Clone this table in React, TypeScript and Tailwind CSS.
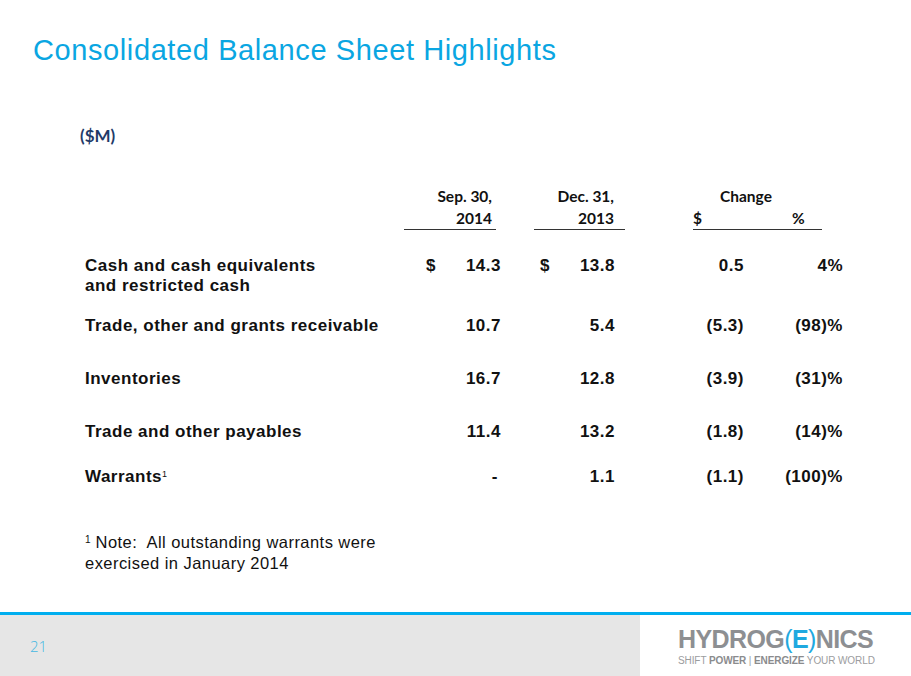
const rows = [
  { label: ["Cash and cash equivalents", "and restricted cash"], a: "14.3", b: "13.8", c: "0.5", d: "4%", dollar: true, mt: "mt-[26px]" },
  { label: ["Trade, other and grants receivable"], a: "10.7", b: "5.4", c: "(5.3)", d: "(98)%", mt: "mt-[20px]" },
  { label: ["Inventories"], a: "16.7", b: "12.8", c: "(3.9)", d: "(31)%", mt: "mt-[33px]" },
  { label: ["Trade and other payables"], a: "11.4", b: "13.2", c: "(1.8)", d: "(14)%", mt: "mt-[33px]" },
  { label: ["Warrants"], sup: true, a: "-", b: "1.1", c: "(1.1)", d: "(100)%", mt: "mt-[25px]" },
];

const calibri = "font-['Lato','Liberation_Sans',sans-serif]";
const arial = "font-['Liberation_Sans','Arial',sans-serif]";

export default function App() {
  return (
    <div className={`w-[911px] h-[676px] bg-white flex flex-col overflow-hidden ${arial}`}>
      <h1 className="mt-[34px] pl-[33px] text-[29px] leading-[32px] text-[#0aa6e2] tracking-[0.6px]">
        Consolidated Balance Sheet Highlights
      </h1>

      <div className={`mt-[60px] pl-[80px] text-[17px] leading-[20px] font-bold text-[#1f3a68] ${calibri}`}>($M)</div>

      {/* column headings */}
      <div className={`mt-[39px] flex pl-[404px] text-[15.5px] leading-[22px] font-bold text-[#111] ${calibri}`}>
        <div className="w-[92px] border-b border-[#333] pr-[4px] text-right">
          <div>Sep. 30,</div>
          <div>2014</div>
        </div>
        <div className="w-[38px]" />
        <div className="w-[91px] border-b border-[#333] pr-[11px] text-right">
          <div>Dec. 31,</div>
          <div>2013</div>
        </div>
        <div className="w-[68px]" />
        <div className="w-[129px] border-b border-[#333]">
          <div className="pl-[27px]">Change</div>
          <div className="flex">
            <span>$</span>
            <span className="ml-[90px]">%</span>
          </div>
        </div>
      </div>

      {/* rows */}
      <div className="flex flex-col text-[17px] leading-[20px] font-bold text-[#111] tracking-[0.5px]">
        {rows.map((r, i) => (
          <div key={i} className={`${r.mt} flex items-start pl-[85px]`}>
            <div className="w-[319px]">
              {r.label.map((l, j) => (
                <div key={j}>
                  {l}
                  {r.sup && (
                    <span className="relative -top-[5px] text-[9px] font-normal tracking-normal leading-none">1</span>
                  )}
                </div>
              ))}
            </div>
            <div className="w-[100px] flex justify-between pl-[22px] pr-[3px]">
              <span>{r.dollar ? "$" : ""}</span>
              <span className={r.a === "-" ? "pr-[3px]" : ""}>{r.a}</span>
            </div>
            <div className="w-[30px]" />
            <div className="w-[91px] flex justify-between pl-[6px] pr-[10px]">
              <span>{r.dollar ? "$" : ""}</span>
              <span>{r.b}</span>
            </div>
            <div className="w-[119px] text-right">{r.c}</div>
            <div className="w-[99px] text-right">{r.d}</div>
          </div>
        ))}
      </div>

      <div className="mt-[45px] pl-[85px] text-[16.5px] leading-[21px] text-[#111] tracking-[0.45px]">
        <div>
          <span className="relative -top-[5px] text-[10px] leading-none tracking-normal">1</span> Note:&nbsp; All outstanding warrants were
        </div>
        <div>exercised in January 2014</div>
      </div>

      {/* footer */}
      <div className="mt-auto h-[3px] bg-[#00aeef]" />
      <div className="h-[61px] flex">
        <div className="w-[640px] bg-[#e6e6e6] pl-[30px] pt-[20px]">
          <span className="text-[15px] font-light text-[#45b8e2] font-['Open_Sans',sans-serif]">21</span>
        </div>
        <div className="flex-1 bg-white pl-[38px] pt-[11px]">
          <div className="text-[25px] leading-[26px] font-bold text-[#8d8f92] tracking-[-0.6px]">
            HYDROG
            <span className="text-[#1fa9e0] font-normal">(</span>
            <span className="text-[#1fa9e0]">E</span>
            <span className="text-[#1fa9e0] font-normal">)</span>
            NICS
          </div>
          <div className="mt-[3px] text-[10px] leading-[11px] text-[#9b9c9e] tracking-[-0.1px]">
            SHIFT <b className="text-[#8a8b8d]">POWER</b> | <b className="text-[#8a8b8d]">ENERGIZE</b> YOUR WORLD
          </div>
        </div>
      </div>
    </div>
  );
}
